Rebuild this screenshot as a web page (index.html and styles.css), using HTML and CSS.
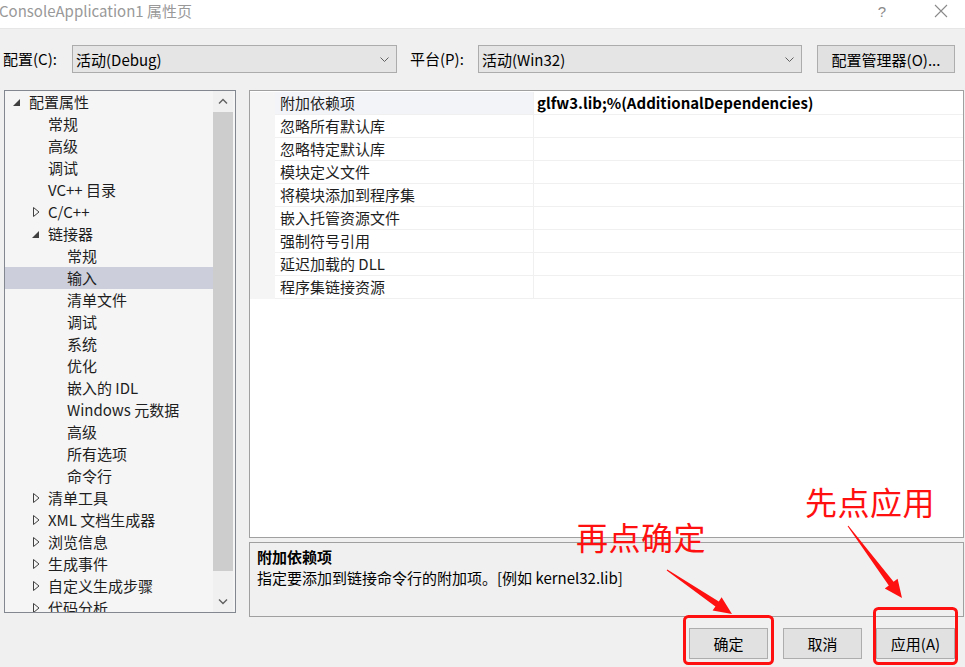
FILE: index.html
```html
<!DOCTYPE html>
<html lang="zh-CN">
<head>
<meta charset="utf-8">
<title>ConsoleApplication1 属性页</title>
<link rel="stylesheet" href="styles.css">
</head>
<body>
<div class="window">
  <div class="titlebar">
    <span class="title">ConsoleApplication1 属性页</span>
    <span class="help">?</span>
    <svg class="close" width="14" height="14" viewBox="0 0 14 14"><path d="M1 1 L13 13 M13 1 L1 13" stroke="#8a8a8a" stroke-width="1.1" fill="none"/></svg>
  </div>

  <div class="toolbar">
    <span class="lbl lbl-config">配置(C):</span>
    <div class="combo combo-config"><span>活动(Debug)</span><svg class="chev" width="9" height="5" viewBox="0 0 9 5"><path d="M0.5 0.5 L4.5 4.5 L8.5 0.5" stroke="#606060" fill="none"/></svg></div>
    <span class="lbl lbl-platform">平台(P):</span>
    <div class="combo combo-platform"><span>活动(Win32)</span><svg class="chev" width="9" height="5" viewBox="0 0 9 5"><path d="M0.5 0.5 L4.5 4.5 L8.5 0.5" stroke="#606060" fill="none"/></svg></div>
    <button class="btn btn-manager">配置管理器(O)...</button>
  </div>

  <div class="main">
    <div class="tree">
      <div class="tree-list">
        <div class="node l0"><svg class="tw" width="16" height="8" viewBox="0 0 16 8"><polygon points="7,1 7,8 0,8" fill="#404040"/></svg>配置属性</div>
        <div class="node l1">常规</div>
        <div class="node l1">高级</div>
        <div class="node l1">调试</div>
        <div class="node l1">VC++ 目录</div>
        <div class="node l1t"><svg class="tw" width="16" height="10" viewBox="0 0 16 10"><polygon points="1.5,0.5 7,5 1.5,9.5" fill="none" stroke="#404040"/></svg>C/C++</div>
        <div class="node l1t"><svg class="tw" width="16" height="8" viewBox="0 0 16 8"><polygon points="7,1 7,8 0,8" fill="#404040"/></svg>链接器</div>
        <div class="node l2">常规</div>
        <div class="node l2 selected">输入</div>
        <div class="node l2">清单文件</div>
        <div class="node l2">调试</div>
        <div class="node l2">系统</div>
        <div class="node l2">优化</div>
        <div class="node l2">嵌入的 IDL</div>
        <div class="node l2">Windows 元数据</div>
        <div class="node l2">高级</div>
        <div class="node l2">所有选项</div>
        <div class="node l2">命令行</div>
        <div class="node l1t"><svg class="tw" width="16" height="10" viewBox="0 0 16 10"><polygon points="1.5,0.5 7,5 1.5,9.5" fill="none" stroke="#404040"/></svg>清单工具</div>
        <div class="node l1t"><svg class="tw" width="16" height="10" viewBox="0 0 16 10"><polygon points="1.5,0.5 7,5 1.5,9.5" fill="none" stroke="#404040"/></svg>XML 文档生成器</div>
        <div class="node l1t"><svg class="tw" width="16" height="10" viewBox="0 0 16 10"><polygon points="1.5,0.5 7,5 1.5,9.5" fill="none" stroke="#404040"/></svg>浏览信息</div>
        <div class="node l1t"><svg class="tw" width="16" height="10" viewBox="0 0 16 10"><polygon points="1.5,0.5 7,5 1.5,9.5" fill="none" stroke="#404040"/></svg>生成事件</div>
        <div class="node l1t"><svg class="tw" width="16" height="10" viewBox="0 0 16 10"><polygon points="1.5,0.5 7,5 1.5,9.5" fill="none" stroke="#404040"/></svg>自定义生成步骤</div>
        <div class="node l1t"><svg class="tw" width="16" height="10" viewBox="0 0 16 10"><polygon points="1.5,0.5 7,5 1.5,9.5" fill="none" stroke="#404040"/></svg>代码分析</div>
      </div>
      <div class="vscroll">
        <div class="sbtn"><svg width="10" height="6" viewBox="0 0 10 6"><path d="M1 5.5 L5 1.5 L9 5.5" stroke="#606060" stroke-width="1.4" fill="none"/></svg></div>
        <div class="thumb"></div>
        <div class="track"></div>
        <div class="sbtn"><svg width="10" height="6" viewBox="0 0 10 6"><path d="M1 0.5 L5 4.5 L9 0.5" stroke="#606060" stroke-width="1.4" fill="none"/></svg></div>
      </div>
    </div>

    <div class="right">
      <div class="grid">
        <div class="row active"><div class="gutter"></div><div class="name">附加依赖项</div><div class="value">glfw3.lib;%(AdditionalDependencies)</div></div>
        <div class="row"><div class="gutter"></div><div class="name">忽略所有默认库</div><div class="value"></div></div>
        <div class="row"><div class="gutter"></div><div class="name">忽略特定默认库</div><div class="value"></div></div>
        <div class="row"><div class="gutter"></div><div class="name">模块定义文件</div><div class="value"></div></div>
        <div class="row"><div class="gutter"></div><div class="name">将模块添加到程序集</div><div class="value"></div></div>
        <div class="row"><div class="gutter"></div><div class="name">嵌入托管资源文件</div><div class="value"></div></div>
        <div class="row"><div class="gutter"></div><div class="name">强制符号引用</div><div class="value"></div></div>
        <div class="row"><div class="gutter"></div><div class="name">延迟加载的 DLL</div><div class="value"></div></div>
        <div class="row"><div class="gutter"></div><div class="name">程序集链接资源</div><div class="value"></div></div>
      </div>
      <div class="desc">
        <div class="desc-title">附加依赖项</div>
        <div class="desc-text">指定要添加到链接命令行的附加项。[例如 kernel32.lib]</div>
      </div>
    </div>
  </div>

  <div class="footer">
    <button class="btn dlg-btn">确定</button>
    <button class="btn dlg-btn btn-cancel">取消</button>
    <button class="btn dlg-btn btn-apply">应用(A)</button>
  </div>

  <svg class="marks" width="965" height="667" viewBox="0 0 965 667">
    <rect x="684.5" y="616.5" width="88" height="47" rx="4" fill="none" stroke="#ff1010" stroke-width="3"/>
    <rect x="874.5" y="608.5" width="82" height="55" rx="4" fill="none" stroke="#ff1010" stroke-width="3"/>
    <polygon points="667.3,569.6 718.8,601.4 721.6,597.3 732,614 712.6,610.5 715.4,606.4 666.7,570.4" fill="#ff1010"/>
    <polygon points="848.4,525.7 893.6,581.8 897.6,578.8 902,598 884.8,588.4 888.8,585.4 847.6,526.3" fill="#ff1010"/>
  </svg>
  <span class="note note-ok">再点确定</span>
  <span class="note note-apply">先点应用</span>
</div>
</body>
</html>
```

FILE: styles.css
```css
* { box-sizing: border-box; }
html, body { margin: 0; padding: 0; }
body {
  width: 965px;
  height: 667px;
  overflow: hidden;
  background: #f0f0f0;
  font-family: "Noto Sans CJK SC", "Noto Sans", sans-serif;
  font-size: 15px;
  color: #000;
}
.window {
  position: relative;
  width: 965px;
  height: 667px;
}
.titlebar {
  height: 29px;
  background: #fff;
  border-bottom: 1px solid #e6e6e6;
  display: flex;
  align-items: center;
}
.title {
  color: #999;
  font-size: 15px;
  margin-left: -1px;
  line-height: 20px;
  margin-top: -6px;
}
.help {
  margin-left: auto;
  color: #8a8a8a;
  font-size: 15px;
  font-family: "Liberation Sans", sans-serif;
  margin-top: -6px;
}
.close {
  margin-left: 48px;
  margin-right: 17px;
  margin-top: -6px;
}

.toolbar {
  display: flex;
  align-items: center;
  padding-top: 16px;
  padding-left: 3px;
  height: 44px;
}
.lbl { line-height: 28px; white-space: nowrap; }
.lbl-config { width: 69px; }
.lbl-platform { width: 68px; margin-left: 13px; }
.combo {
  height: 28px;
  background: #e5e5e5;
  border: 1px solid #acacac;
  display: flex;
  align-items: center;
  padding-left: 3px;
  padding-right: 7px;
}
.combo span { flex: 1; }
.combo-config { width: 325px; }
.combo-platform { width: 324px; }
.btn {
  font-family: inherit;
  font-size: 15px;
  color: #000;
  background: #e1e1e1;
  border: 1px solid #adadad;
  padding: 0;
  margin: 0;
}
.btn-manager { width: 138px; height: 28px; margin-left: 15px; }

.main {
  display: flex;
  margin-top: 17px;
  padding-left: 4px;
  height: 527px;
}
.tree {
  width: 232px;
  height: 523px;
  border: 1px solid #828790;
  background: #f5f5f5;
  display: flex;
  overflow: hidden;
}
.tree-list { width: 208px; overflow: hidden; }
.node {
  height: 22px;
  line-height: 22px;
  display: flex;
  align-items: center;
  white-space: nowrap;
  color: #1e1e1e;
}
.node .tw { flex: none; }
.l0 { padding-left: 8px; }
.l1 { padding-left: 43px; }
.l1t { padding-left: 27px; }
.l2 { padding-left: 62px; }
.selected { background: #cccedb; }

.vscroll {
  width: 20px;
  display: flex;
  flex-direction: column;
  background: #f0f0f0;
}
.sbtn {
  height: 20px;
  display: flex;
  align-items: center;
  justify-content: center;
  flex: none;
}
.thumb { height: 459px; margin-top: 1px; background: #cdcdcd; flex: none; }
.track { flex: 1; }

.right {
  margin-left: 13px;
  width: 715px;
  display: flex;
  flex-direction: column;
}
.grid {
  height: 448px;
  border: 1px solid #a0a0a0;
  background: #fff;
  padding-top: 1px;
}
.row {
  display: flex;
  height: 23px;
}
.gutter { width: 25px; background: #f5f5f5; flex: none; }
.name {
  width: 259px;
  flex: none;
  padding-left: 5px;
  line-height: 22px;
  border-bottom: 1px solid #f0f0f0;
  border-right: 1px solid #f0f0f0;
  color: #1e1e1e;
}
.value {
  flex: 1;
  padding-left: 3px;
  line-height: 22px;
  border-bottom: 1px solid #f0f0f0;
  font-weight: bold;
}
.row.active .name { background: #f2f4f8; }

.desc {
  margin-top: 4px;
  height: 75px;
  border: 1px solid #a0a0a0;
  background: #f0f0f0;
  padding: 4px 7px;
}
.desc-title { font-weight: bold; line-height: 20px; }
.desc-text { line-height: 22px; }

.footer {
  display: flex;
  justify-content: flex-end;
  padding-right: 10px;
  margin-top: 11px;
}
.dlg-btn { width: 79px; height: 31px; }
.btn-cancel { margin-left: 15px; }
.btn-apply { margin-left: 14px; }

.marks {
  position: absolute;
  left: 0;
  top: 0;
  pointer-events: none;
}
.note {
  position: absolute;
  color: #ff1010;
  font-size: 32px;
  line-height: 40px;
  white-space: nowrap;
  letter-spacing: 0.5px;
}
.note-ok { left: 576px; top: 516px; }
.note-apply { left: 805px; top: 481px; }
```
